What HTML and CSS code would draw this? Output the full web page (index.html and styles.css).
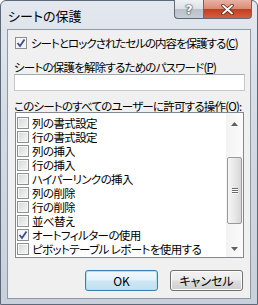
FILE: index.html
```html
<!DOCTYPE html>
<html lang="ja">
<head>
    <meta charset="UTF-8">
    <title>シートの保護</title>
    <link rel="stylesheet" href="styles.css">
</head>
<body>
    <div class="window">
        <div class="titlebar">
            <span class="title">シートの保護</span>
            <div class="caption-buttons">
                <div class="cap-btn help">?</div>
                <div class="cap-btn close">
                    <svg width="13" height="11" viewBox="0 0 13 11">
                        <path d="M2 1.5 L11 9.5 M11 1.5 L2 9.5" stroke="#5a2418" stroke-width="3.4" stroke-linecap="round"/>
                        <path d="M2 1.5 L11 9.5 M11 1.5 L2 9.5" stroke="#ffffff" stroke-width="1.8" stroke-linecap="round"/>
                    </svg>
                </div>
            </div>
        </div>

        <div class="client">
            <div class="check-row main-check">
                <span class="box checked">
                    <svg width="10" height="10" viewBox="0 0 10 10"><path d="M1.5 5 L4 8 L8.5 1.5" fill="none" stroke="#3a4f8f" stroke-width="1.8"/></svg>
                </span>
                <span>シートとロックされたセルの内容を保護する(<u>C</u>)</span>
            </div>

            <div class="label pw-label">シートの保護を解除するためのパスワード(<u>P</u>)</div>
            <div class="textbox"></div>

            <div class="label ops-label">このシートのすべてのユーザーに許可する操作(<u>O</u>):</div>
            <div class="listbox">
                <ul class="items">
                    <li><span class="box"></span><span class="item-text">列の書式設定</span></li>
                    <li><span class="box"></span><span class="item-text">行の書式設定</span></li>
                    <li><span class="box"></span><span class="item-text">列の挿入</span></li>
                    <li><span class="box"></span><span class="item-text">行の挿入</span></li>
                    <li><span class="box"></span><span class="item-text">ハイパーリンクの挿入</span></li>
                    <li><span class="box"></span><span class="item-text">列の削除</span></li>
                    <li><span class="box"></span><span class="item-text">行の削除</span></li>
                    <li><span class="box"></span><span class="item-text">並べ替え</span></li>
                    <li><span class="box checked"><svg width="10" height="10" viewBox="0 0 10 10"><path d="M1.5 5 L4 8 L8.5 1.5" fill="none" stroke="#3a4f8f" stroke-width="1.8"/></svg></span><span class="item-text">オートフィルターの使用</span></li>
                    <li><span class="box"></span><span class="item-text">ピボットテーブル レポートを使用する</span></li>
                </ul>
                <div class="scrollbar">
                    <div class="arrow up"><svg width="7" height="4" viewBox="0 0 7 4"><path d="M0 4 L3.5 0 L7 4 Z" fill="#606060"/></svg></div>
                    <div class="track">
                        <div class="thumb">
                            <span class="grip"></span>
                            <span class="grip"></span>
                            <span class="grip"></span>
                        </div>
                    </div>
                    <div class="arrow down"><svg width="7" height="4" viewBox="0 0 7 4"><path d="M0 0 L3.5 4 L7 0 Z" fill="#606060"/></svg></div>
                </div>
            </div>

            <div class="buttons">
                <div class="btn default">OK</div>
                <div class="btn">キャンセル</div>
            </div>
        </div>
    </div>
</body>
</html>
```

FILE: styles.css
```css
* {
    margin: 0;
    padding: 0;
    box-sizing: border-box;
}

body {
    background: #ffffff;
    font-family: "Noto Sans CJK JP", sans-serif;
    font-size: 11.5px;
    font-feature-settings: "palt";
    color: #000;
}

.window {
    width: 258px;
    height: 305px;
    display: flex;
    flex-direction: column;
    padding: 0 6px 5px 6px;
    border: 1px solid #5d6978;
    border-radius: 6px 6px 0 0;
    background: linear-gradient(to bottom, #e3e8ee, #d3dbe4 40%, #c8d1db);
}

.titlebar {
    height: 28px;
    display: flex;
    align-items: flex-start;
}

.title {
    margin-top: 7px;
    margin-left: 1px;
    font-size: 13px;
    line-height: 16px;
    color: #000;
}

.caption-buttons {
    display: flex;
    margin-left: auto;
    margin-right: -1px;
    margin-top: -1px;
}

.cap-btn {
    height: 19px;
    display: flex;
    align-items: center;
    justify-content: center;
    border: 1px solid #5e6a77;
    border-top: none;
}

.help {
    width: 29px;
    border-radius: 0 0 0 4px;
    border-right: none;
    background: linear-gradient(to bottom, #eef1f4, #dde2e8 48%, #b9c1ca 52%, #c7ced6);
    color: #fff;
    font-family: "DejaVu Sans", sans-serif;
    font-weight: bold;
    font-size: 13px;
    text-shadow: 0 0 1px #333, 0 0 1px #333, 0 0 2px #555;
}

.close {
    width: 49px;
    border-radius: 0 0 4px 0;
    background: linear-gradient(to bottom, #e9b2a4, #d98b77 48%, #c33c21 52%, #d3613f);
}

.client {
    flex: 1;
    display: flex;
    flex-direction: column;
    background: #f0f0f0;
    border: 1px solid #8d99a6;
    padding: 0 5px 0 6px;
}

.box {
    width: 12px;
    height: 12px;
    flex: none;
    display: flex;
    align-items: center;
    justify-content: center;
    border: 1px solid #8e8f8f;
    background: linear-gradient(135deg, #d3d6da, #f7f7f7);
    box-shadow: inset 0 0 0 1px #f6f6f6;
}

.box.checked {
    background: #f4f4f4;
}

.check-row {
    display: flex;
    align-items: center;
    gap: 4px;
    height: 12px;
    margin-top: 7px;
    margin-left: 1px;
    line-height: 12px;
    letter-spacing: -1px;
    white-space: nowrap;
}

.label {
    line-height: 12px;
    height: 12px;
    letter-spacing: -0.8px;
    white-space: nowrap;
}

.pw-label {
    margin-top: 12px;
}

.textbox {
    height: 17px;
    margin-top: 1px;
    background: #fff;
    border: 1px solid #c3c6cc;
    border-top-color: #a5a9b0;
}

.ops-label {
    margin-top: 9px;
}

.listbox {
    height: 146px;
    margin: 0 1px 0 1px;
    display: flex;
    background: #fff;
    border: 1px solid #828790;
    overflow: hidden;
}

.items {
    flex: 1;
    min-width: 0;
    list-style: none;
    padding-top: 3px;
    padding-left: 1px;
    letter-spacing: -0.6px;
}

.items li {
    height: 14px;
    display: flex;
    align-items: center;
    gap: 3px;
    white-space: nowrap;
}

.item-text {
    display: block;
    height: 14px;
    line-height: 14px;
    overflow: hidden;
}

.scrollbar {
    width: 17px;
    flex: none;
    display: flex;
    flex-direction: column;
    background: linear-gradient(to right, #f3f3f3, #fbfbfb);
}

.arrow {
    height: 17px;
    display: flex;
    justify-content: center;
}

.arrow.up {
    align-items: flex-end;
    padding-bottom: 4px;
}

.arrow.down {
    align-items: flex-start;
    padding-top: 7px;
}

.track {
    flex: 1;
}

.thumb {
    margin: 27px 1px 0 1px;
    height: 67px;
    display: flex;
    flex-direction: column;
    align-items: center;
    justify-content: center;
    gap: 1px;
    border: 1px solid #9a9a9a;
    border-radius: 2px;
    background: linear-gradient(to right, #f4f4f4, #e8e8e8 50%, #d6d6d6);
}

.grip {
    width: 6px;
    height: 1px;
    background: #6a6a6a;
    box-shadow: 0 1px 0 #fff;
}

.buttons {
    display: flex;
    justify-content: flex-end;
    gap: 12px;
    margin-top: 12px;
    margin-right: 2px;
}

.btn {
    width: 73px;
    height: 21px;
    display: flex;
    align-items: center;
    justify-content: center;
    border: 1px solid #707070;
    border-radius: 3px;
    background: linear-gradient(to bottom, #f2f2f2, #ebebeb 48%, #dddddd 52%, #cfcfcf);
    box-shadow: inset 0 0 0 1px #fcfcfc;
    font-size: 12px;
    line-height: 14px;
}

.btn.default {
    border-color: #3c7fb1;
    background: linear-gradient(to bottom, #f1f8fc, #e3f1f9 48%, #cde7f5 52%, #c0e0f1);
    box-shadow: inset 0 0 0 1px #aee0f6;
}
```
